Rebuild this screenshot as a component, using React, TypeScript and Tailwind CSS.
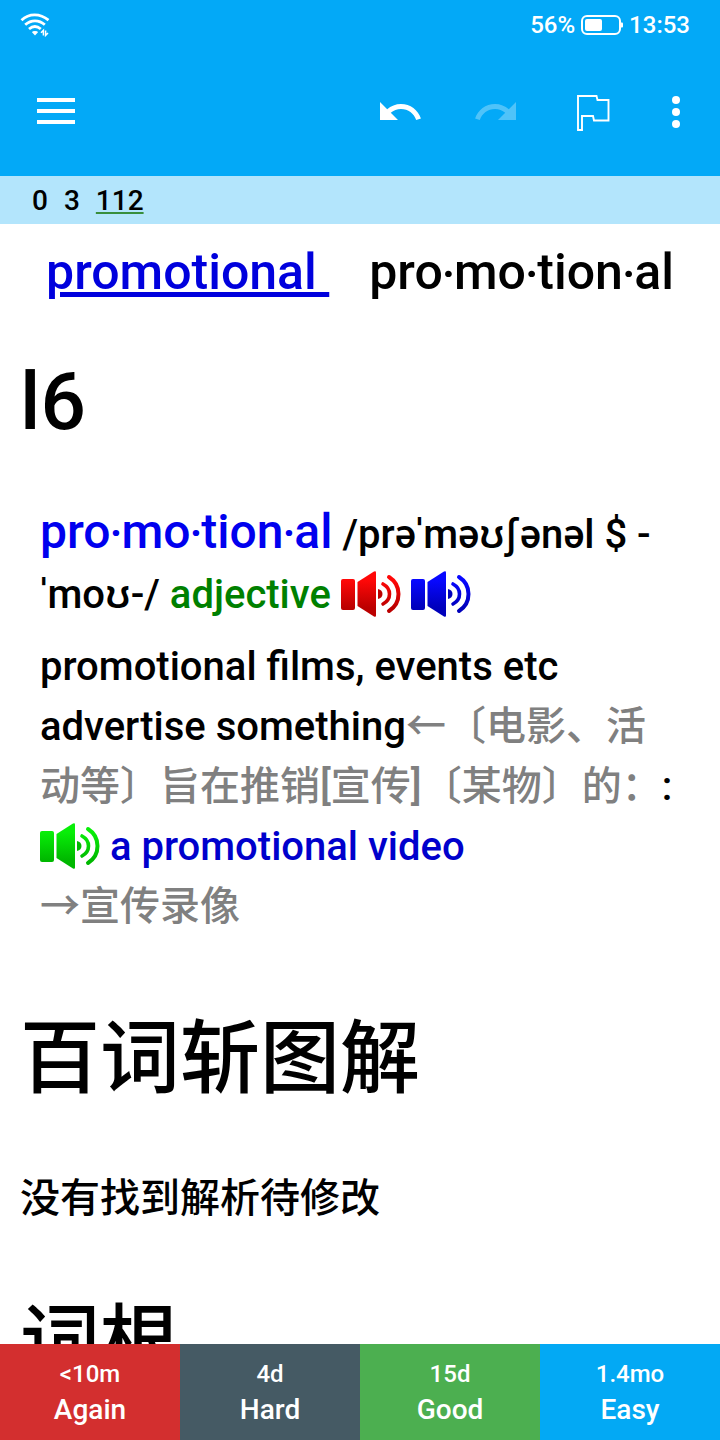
import React from "react";

function WifiIcon() {
  return (
    <svg width="30" height="24" viewBox="0 0 30 24" fill="none" stroke="#fff" strokeWidth="2.8" aria-hidden="true">
      <path d="M1.500 7.200C9 .2 20 .2 28.500 7.200" />
      <path d="M5.200 11.800C11 6.600 19 6.600 24.800 11.800" />
      <path d="M9 16C12.800 12.800 17 12.800 20.800 16" />
      <path d="M12 19.300Q12.200 18 15 18Q17.800 18 18 19.300L15 22.400Z" fill="#fff" stroke="none" />
      <path d="M23.400 22.400V17.400L21 19.800M25.600 17.400V22.400L28 20" strokeWidth="1.500" />
    </svg>
  );
}

function BatteryIcon() {
  return (
    <svg width="42" height="20" viewBox="0 0 42 20" aria-hidden="true">
      <rect x="1" y="1" width="38" height="18" rx="5" fill="none" stroke="#fff" strokeWidth="2" />
      <rect x="4" y="4" width="17" height="12" rx="2" fill="#fff" />
      <path d="M40 7.5h1q1 0 1 1v3q0 1-1 1h-1z" fill="#fff" />
    </svg>
  );
}

function Speaker({ id, light, dark, label }: { id: string; light: string; dark: string; label: string }) {
  return (
    <button type="button" aria-label={label} className="inline-block align-[-9px]">
      <svg width="60" height="46" viewBox="0 0 60 46" className="block">
        <defs>
          <linearGradient id={id} x1="0" y1="0" x2="0" y2="46" gradientUnits="userSpaceOnUse">
            <stop offset="0.2" stopColor={light} />
            <stop offset="0.8" stopColor={dark} />
          </linearGradient>
        </defs>
        <rect x="0" y="8" width="14" height="31" rx="2" fill={`url(#${id})`} />
        <path d="M16.500 11L33 .5q2-1 2 1v43q0 2-2 1L16.500 35Z" fill={`url(#${id})`} />
        <path d="M37 18q4.500 1 4.500 5t-4.500 5z" fill={dark} />
        <path d="M42 13q6.500 3.500 6.500 10t-6.500 10" fill="none" stroke={`url(#${id})`} strokeWidth="3.6" strokeLinecap="round" />
        <path d="M48 6Q57.500 12 57.500 23T48 40" fill="none" stroke={`url(#${id})`} strokeWidth="4" strokeLinecap="round" />
      </svg>
    </button>
  );
}

function ToolButton({ label, disabled, children }: { label: string; disabled?: boolean; children: React.ReactNode }) {
  return (
    <button type="button" aria-label={label} disabled={disabled} className="size-12 shrink-0 text-white disabled:opacity-30">
      <svg viewBox="0 0 48 48" className="block size-12" fill="currentColor">
        {children}
      </svg>
    </button>
  );
}

const answers = [
  { time: "<10m", name: "Again", color: "bg-[#d32f2f]" },
  { time: "4d", name: "Hard", color: "bg-[#455a64]" },
  { time: "15d", name: "Good", color: "bg-[#4caf50]" },
  { time: "1.4mo", name: "Easy", color: "bg-[#03a9f4]" },
];

export default function App() {
  return (
    <div className="flex h-screen flex-col bg-white font-['Roboto','Noto_Sans_CJK_SC',sans-serif] font-medium text-black">
      <header className="shrink-0 bg-[#03a9f7] text-white">
        <div className="flex h-12 items-center justify-between pt-px pr-[30px] pl-5">
          <WifiIcon />
          <div className="flex items-center gap-1.5 text-2xl">
            <span>56%</span>
            <BatteryIcon />
            <span>13:53</span>
          </div>
        </div>
        <nav className="flex h-32 items-center pr-5 pl-8">
          <ToolButton label="Menu">
            <path d="M5 10h38v4H5zM5 21h38v4H5zM5 32h38v4H5z" />
          </ToolButton>
          <div className="ml-auto flex items-center gap-12">
            <ToolButton label="Undo">
              <path
                transform="scale(2)"
                d="M12.5 8c-2.650 0-5.050.99-6.900 2.600L2 7v9h9l-3.620-3.620c1.390-1.160 3.160-1.880 5.120-1.880 3.540 0 6.550 2.310 7.600 5.500l2.370-.78C21.080 11.030 17.150 8 12.500 8z"
              />
            </ToolButton>
            <ToolButton label="Redo" disabled>
              <path
                transform="scale(2)"
                d="M18.400 10.600C16.550 8.990 14.150 8 11.500 8c-4.650 0-8.580 3.030-9.960 7.220L3.900 16c1.050-3.190 4.050-5.500 7.600-5.500 1.950 0 3.730.72 5.120 1.880L13 16h9V7l-3.600 3.600z"
              />
            </ToolButton>
            <div className="flex gap-9">
              <ToolButton label="Flag">
                <path
                  d="M10 8H28.500L29.500 12H40.500V32.500H26L25 28H14V42H10Z"
                  fill="none"
                  stroke="currentColor"
                  strokeWidth="1.900"
                />
              </ToolButton>
              <ToolButton label="More options">
                <circle cx="24" cy="12" r="4" />
                <circle cx="24" cy="24" r="4" />
                <circle cx="24" cy="36" r="4" />
              </ToolButton>
            </div>
          </div>
        </nav>
      </header>

      <div className="flex h-12 shrink-0 items-center gap-4 bg-[#b3e5fc] px-8 pt-0.5 text-[28px]">
        <span>0</span>
        <span>3</span>
        <span className="underline decoration-[#388e3c] decoration-2 underline-offset-2">112</span>
      </div>

      <main className="min-h-0 flex-1 overflow-hidden px-5 text-[40px] leading-[60px]">
        <div className="flex justify-center gap-10 pt-[18px] text-[50px]">
          <a href="#promotional" className="whitespace-pre text-[#0000dd] underline">
            {"promotional "}
          </a>
          <span>pro‧mo‧tion‧al</span>
        </div>

        <h1 className="mt-10 text-[80px] leading-[120px]">l6</h1>

        <section className="mt-10 px-5">
          <p>
            <span className="text-[48px] text-[#0000ee]">pro‧mo‧tion‧al</span>{" "}
            <span className="font-['Roboto','Inter',sans-serif]">/prəˈməʊʃənəl $ -ˈmoʊ-/</span>{" "}
            <span className="text-[#008000]">adjective</span>{" "}
            <Speaker id="speaker-red" light="#ff0808" dark="#bb0000" label="Play British pronunciation" />{" "}
            <Speaker id="speaker-blue" light="#0808ff" dark="#0000bb" label="Play American pronunciation" />
          </p>
          <p className="mt-3">
            promotional films, events etc advertise something
            <span className="text-[#808080]">←〔电影、活动等〕旨在推销[宣传]〔某物〕的：</span>:
          </p>
          <p>
            <Speaker id="speaker-green" light="#08ee08" dark="#00b800" label="Play example" />{" "}
            <span className="text-[#0000cc]">a promotional video</span>
          </p>
          <p className="text-[#808080]">→宣传录像</p>
        </section>

        <h1 className="mt-[62px] text-[80px] leading-[120px]">百词斩图解</h1>
        <p className="mt-[50px]">没有找到解析待修改</p>
        <h1 className="mt-[54px] text-[80px] leading-[120px]">词根</h1>
      </main>

      <footer className="grid h-24 shrink-0 grid-cols-4 text-white">
        {answers.map((a) => (
          <button key={a.name} type="button" className={`flex flex-col items-center justify-center pt-1 ${a.color}`}>
            <span className="text-2xl leading-8">{a.time}</span>
            <span className="text-[28px] leading-10">{a.name}</span>
          </button>
        ))}
      </footer>
    </div>
  );
}
